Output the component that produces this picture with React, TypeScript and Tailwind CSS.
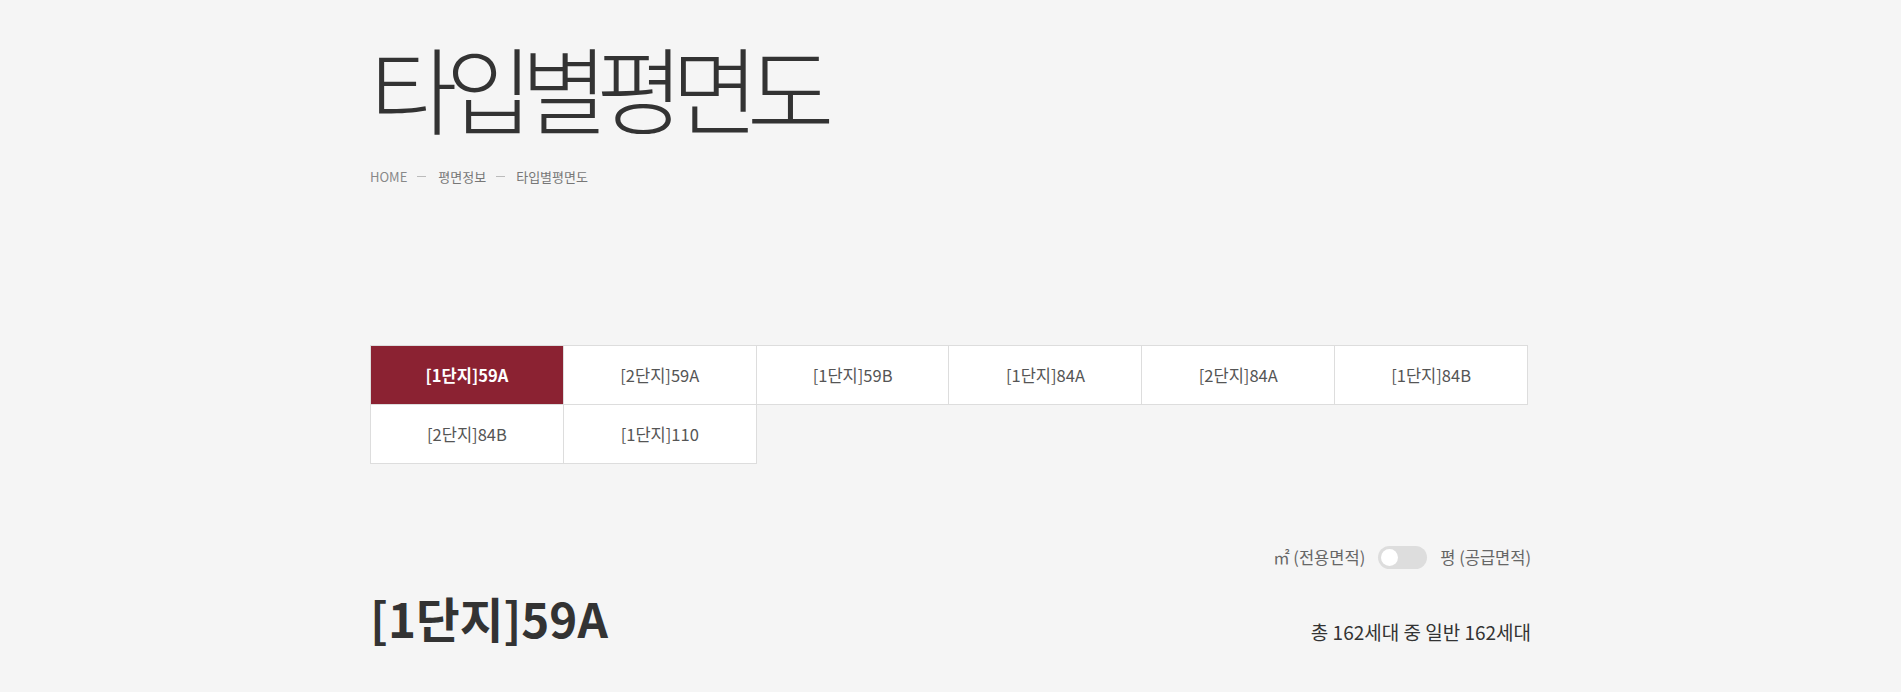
import { useState } from "react"

const TABS = [
  "[1단지]59A",
  "[2단지]59A",
  "[1단지]59B",
  "[1단지]84A",
  "[2단지]84A",
  "[1단지]84B",
  "[2단지]84B",
  "[1단지]110",
]

export default function App() {
  const [active, setActive] = useState(0)
  const [pyeong, setPyeong] = useState(false)

  return (
    <div
      className="min-h-screen bg-[#f5f5f5] text-[#333]"
      style={{ fontFamily: '"Noto Sans CJK KR", "Noto Sans", sans-serif' }}
    >
      <div className="mx-auto w-[1161px] pt-[39px] pb-[40px]">
        {/* Page title */}
        <h1 className="text-[95px] font-light leading-none tracking-[-12px] text-[#333]">
          타입별평면도
        </h1>

        {/* Breadcrumb */}
        <div className="mt-[36px] flex items-center text-[13px] leading-none text-[#777]">
          <span className="text-[#888]">HOME</span>
          <span className="ml-[10px] mr-[12px] h-px w-[9px] bg-[#bbb]" />
          <span>평면정보</span>
          <span className="ml-[10px] mr-[11px] h-px w-[9px] bg-[#bbb]" />
          <span>타입별평면도</span>
        </div>

        {/* Type tabs */}
        <div className="mt-[162px] grid w-[1158px] grid-cols-6 border-l border-t border-[#ddd]">
          {TABS.map((tab, i) => (
            <button
              key={tab}
              onClick={() => setActive(i)}
              className={
                i === active
                  ? "flex h-[59px] items-center justify-center border-b border-r border-[#ddd] bg-[#8b2232] text-[16.5px] font-bold text-white"
                  : "flex h-[59px] items-center justify-center border-b border-r border-[#ddd] bg-white text-[16.5px] text-[#555]"
              }
            >
              {tab}
            </button>
          ))}
        </div>

        {/* Area unit toggle */}
        <div className="mt-[81px] flex items-center justify-end gap-[13px] text-[16.5px] text-[#666]">
          <span>㎡ (전용면적)</span>
          <button
            onClick={() => setPyeong(!pyeong)}
            className="relative h-[23px] w-[49px] rounded-full bg-[#ddd]"
          >
            <span
              className={
                pyeong
                  ? "absolute left-[29px] top-[3px] h-[17px] w-[17px] rounded-full bg-white"
                  : "absolute left-[3px] top-[3px] h-[17px] w-[17px] rounded-full bg-white"
              }
            />
          </button>
          <span>평 (공급면적)</span>
        </div>

        {/* Type heading */}
        <div className="mt-[24px] flex items-end justify-between">
          <h2 className="text-[47.5px] font-bold leading-none text-[#333]">
            {TABS[active]}
          </h2>
          <p className="text-[19px] leading-none text-[#333]">
            총 162세대 중 일반 162세대
          </p>
        </div>
      </div>
    </div>
  )
}
